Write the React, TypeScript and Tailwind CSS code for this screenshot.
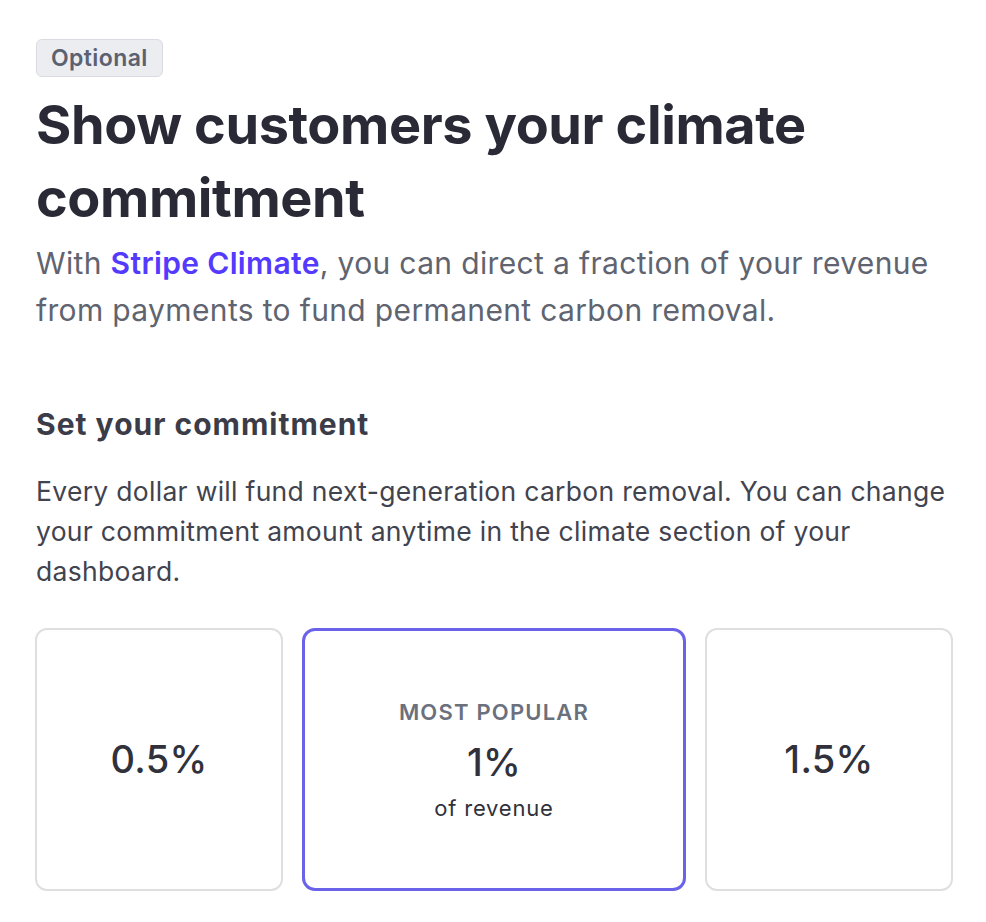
import React from "react";

export default function App() {
  return (
    <div
      className="min-h-[922px] w-[986px] bg-white pl-[36px] pr-[32px] pt-[39px]"
      style={{ fontFamily: "Inter, 'Noto Sans', sans-serif" }}
    >
      <div className="inline-flex h-[38px] items-center rounded-[6px] border border-[#d9dbe1] bg-[#ebedf1] px-[14px] text-[23px] font-semibold tracking-[0.4px] text-[#5b6170]">
        Optional
      </div>
      <h1 className="mt-[11px] text-[54px] font-bold leading-[73px] tracking-[-0.4px] text-[#292a36]">
        Show customers your climate commitment
      </h1>
      <p className="mt-[6px] text-[30px] leading-[47px] tracking-[0.35px] text-[#5f6470]">
        With <span className="font-semibold text-[#533afd]">Stripe Climate</span>, you can direct a fraction of your revenue from payments to fund permanent carbon removal.
      </p>
      <h2 className="mt-[70px] text-[30px] font-bold leading-[40px] tracking-[1px] text-[#3b3c47]">
        Set your commitment
      </h2>
      <p className="mt-[27px] text-[26.5px] leading-[40px] tracking-[0.3px] text-[#41434e]">
        Every dollar will fund next-generation carbon removal. You can change your commitment amount anytime in the climate section of your dashboard.
      </p>
      <div className="mt-[37px] grid grid-cols-[248px_384px_248px] gap-[19px] -ml-[1px]">
        <div className="flex h-[263px] items-center justify-center rounded-[12px] border-2 border-[#dfdfe2] text-[38px] font-medium tracking-[0.3px] text-[#30313b]">
          0.5%
        </div>
        <div className="flex h-[263px] flex-col items-center justify-center rounded-[13px] border-[3px] border-[#6a63e9]">
          <div className="text-[22px] font-semibold leading-[28px] tracking-[1.2px] text-[#6b707d]">MOST POPULAR</div>
          <div className="mt-[14px] text-[38px] font-medium leading-[44px] tracking-[0.3px] text-[#30313b]">1%</div>
          <div className="mt-[10px] text-[22px] leading-[28px] tracking-[0.8px] text-[#30313b]">of revenue</div>
        </div>
        <div className="flex h-[263px] items-center justify-center rounded-[12px] border-2 border-[#dfdfe2] text-[38px] font-medium tracking-[0.3px] text-[#30313b]">
          1.5%
        </div>
      </div>
    </div>
  );
}
